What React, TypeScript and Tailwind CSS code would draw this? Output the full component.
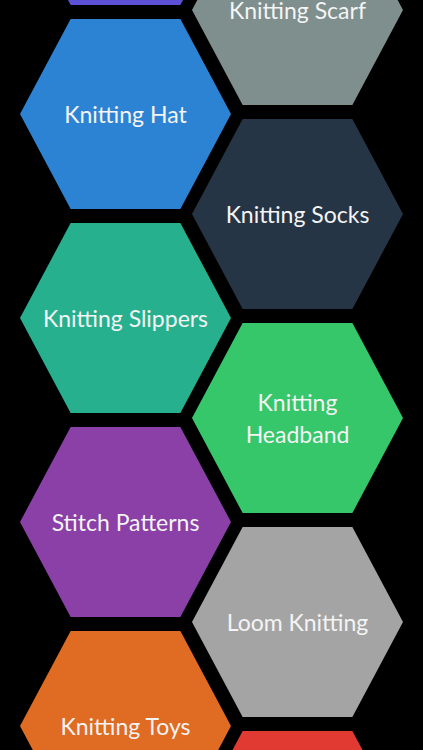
import React from 'react'

interface Tile {
  label: string[]
  color: string
}

// left column starts with the cut-off purple tile above "Knitting Hat"
const LEFT: Tile[] = [
  { label: [], color: 'bg-[#5c50d6]' },
  { label: ['Knitting Hat'], color: 'bg-[#2d83d3]' },
  { label: ['Knitting Slippers'], color: 'bg-[#27b08e]' },
  { label: ['Stitch Patterns'], color: 'bg-[#8a40a6]' },
  { label: ['Knitting Toys'], color: 'bg-[#e06b22]' },
]

const RIGHT: Tile[] = [
  { label: ['Knitting Scarf'], color: 'bg-[#7f8f8d]' },
  { label: ['Knitting Socks'], color: 'bg-[#263545]' },
  { label: ['Knitting', 'Headband'], color: 'bg-[#35c76a]' },
  { label: ['Loom Knitting'], color: 'bg-[#a4a4a4]' },
  { label: [], color: 'bg-[#e03a33]' },
]

function Hexagon({ tile }: { tile: Tile }) {
  return (
    <div
      className={`${tile.color} w-[211px] h-[190px] shrink-0 flex flex-col items-center justify-center text-center text-[#f4f4f4] text-[23px] leading-[32px] [clip-path:polygon(24%_0,76%_0,100%_50%,76%_100%,24%_100%,0_50%)]`}
    >
      {tile.label.map((line, i) => (
        <span key={i}>{line}</span>
      ))}
    </div>
  )
}

export default function App() {
  return (
    <div
      className="h-[750px] w-full overflow-hidden bg-black"
      style={{ fontFamily: 'Lato, "Open Sans", sans-serif' }}
    >
      <div className="flex pl-[20px]">
        <div className="flex flex-col gap-[14px] mt-[-185px]">
          {LEFT.map((t, i) => (
            <Hexagon key={i} tile={t} />
          ))}
        </div>
        <div className="flex flex-col gap-[14px] mt-[-85px] ml-[-39px]">
          {RIGHT.map((t, i) => (
            <Hexagon key={i} tile={t} />
          ))}
        </div>
      </div>
    </div>
  )
}
